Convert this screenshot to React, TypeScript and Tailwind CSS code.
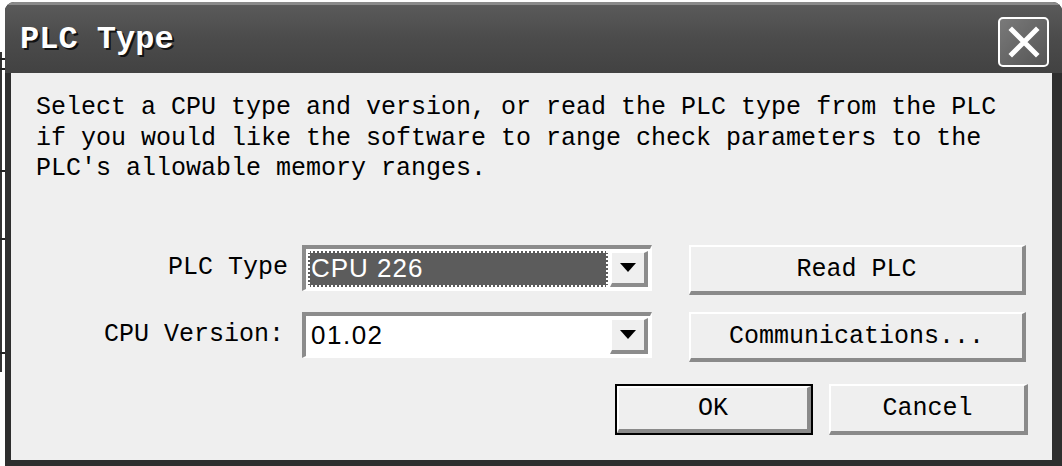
import React from 'react';

const mono = { fontFamily: '"Liberation Mono", "DejaVu Sans Mono", monospace' };
const sans = { fontFamily: '"Liberation Sans", Arial, sans-serif' };

function Arrow() {
  return (
    <svg width="16" height="9" viewBox="0 0 16 9">
      <path d="M0 0 H16 L8 9 Z" fill="#000" />
    </svg>
  );
}

function Combo({ value, selected }: { value: string; selected?: boolean }) {
  return (
    <div className="flex h-[46px] w-[350px] border-t-[4px] border-l-[4px] border-b-[2px] border-r-[2px] border-t-[#8c8c8c] border-l-[#8c8c8c] border-b-white border-r-white bg-white">
      <div className="flex-1 flex items-center p-[2px]">
        {selected ? (
          <div
            className="flex h-full w-full items-center bg-[#5c5c5c] pl-[3px] text-[26px] tracking-[1px] text-white outline-dotted outline-2 outline-offset-[-2px] outline-white"
            style={sans}
          >
            {value}
          </div>
        ) : (
          <div className="pl-[3px] text-[26px] tracking-[1.5px] text-black" style={sans}>
            {value}
          </div>
        )}
      </div>
      <div className="my-[2px] mr-[2px] flex w-[38px] items-center justify-center border-t-2 border-l-2 border-t-white border-l-white border-b-[4px] border-r-[4px] border-b-[#8c8c8c] border-r-[#8c8c8c] bg-[#efefef]">
        <Arrow />
      </div>
    </div>
  );
}

function Btn({ label, w, def }: { label: string; w: string; def?: boolean }) {
  return (
    <div className={`${w} ${def ? 'border-2 border-black' : ''}`}>
      <div
        className="flex h-full w-full items-center justify-center border-t-2 border-l-2 border-t-white border-l-white border-b-[4px] border-r-[4px] border-b-[#8a8a8a] border-r-[#8a8a8a] bg-[#efefef] pt-[2px] text-[25px] text-black"
        style={mono}
      >
        {label}
      </div>
    </div>
  );
}

export default function App() {
  return (
    <div className="relative h-[466px] w-[1062px] overflow-hidden bg-white">
      <div className="absolute left-0 top-[52px] h-[320px] w-[2px] bg-[#333]" />
      <div className="absolute left-0 top-[58px] h-[2px] w-[5px] bg-[#222]" />
      <div className="absolute left-0 top-[68px] h-[2px] w-[5px] bg-[#222]" />
      <div className="absolute left-0 top-[170px] h-[2px] w-[5px] bg-[#222]" />
      <div className="absolute left-0 top-[238px] h-[2px] w-[5px] bg-[#222]" />
      <div className="absolute left-0 top-[352px] h-[2px] w-[5px] bg-[#222]" />

      <div className="ml-[5px] mt-[2px] flex h-[464px] w-[1057px] flex-col overflow-hidden rounded-t-[9px] bg-[#2e2e2e]">
        {/* title bar */}
        <div className="flex h-[71px] items-center justify-between border-t-[3px] border-t-[#8a8a8a] bg-gradient-to-b from-[#5a5a5a] via-[#4b4b4b] to-[#424242] pl-[15px] pr-[13px]">
          <div
            className="pt-[2px] text-[32px] font-bold text-white [text-shadow:2px_2px_0_#111]"
            style={{ fontFamily: '"Liberation Mono", "Liberation Serif", monospace' }}
          >
            PLC Type
          </div>
          <div className="mt-[6px] flex h-[50px] w-[51px] items-center justify-center rounded-[5px] border-2 border-white bg-gradient-to-br from-[#7a7a7a] to-[#555]">
            <svg width="32" height="32" viewBox="0 0 32 32">
              <path d="M4 4 L28 28 M28 4 L4 28" stroke="#fff" strokeWidth="5" strokeLinecap="square" />
            </svg>
          </div>
        </div>

        {/* body */}
        <div className="mb-[6px] ml-[6px] mr-[10px] flex-1 bg-[#efefef] pl-[25px] pt-[20px]">
          <p className="text-[25px] leading-[30.5px] text-black" style={mono}>
            Select a CPU type and version, or read the PLC type from the PLC
            <br />
            if you would like the software to range check parameters to the
            <br />
            PLC's allowable memory ranges.
          </p>

          <div className="mt-[60px] flex flex-col gap-[17px]">
            <div className="flex items-start">
              <div className="flex h-[46px] w-[252px] items-center justify-end text-[25px]" style={mono}>
                PLC Type
              </div>
              <div className="ml-[14px]">
                <Combo value="CPU 226" selected />
              </div>
              <div className="ml-[37px]">
                <Btn label="Read PLC" w="w-[337px] h-[50px]" />
              </div>
            </div>
            <div className="flex items-start">
              <div className="flex h-[46px] w-[248px] items-center justify-end text-[25px]" style={mono}>
                CPU Version:
              </div>
              <div className="ml-[18px]">
                <Combo value="01.02" />
              </div>
              <div className="ml-[37px]">
                <Btn label="Communications..." w="w-[337px] h-[50px]" />
              </div>
            </div>
          </div>

          <div className="mt-[22px] flex gap-[16px] pl-[579px]">
            <Btn label="OK" w="w-[198px] h-[51px]" def />
            <Btn label="Cancel" w="w-[199px] h-[51px]" />
          </div>
        </div>
      </div>
    </div>
  );
}
